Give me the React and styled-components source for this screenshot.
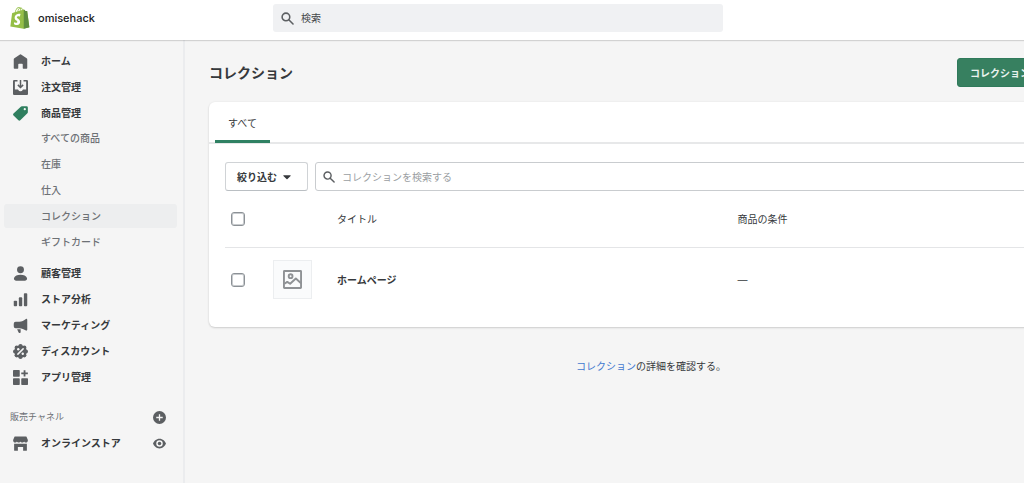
import React from 'react';
import styled, { createGlobalStyle } from 'styled-components';

const GlobalStyle = createGlobalStyle`
  * {
    box-sizing: border-box;
  }
  body {
    margin: 0;
    background-color: #f5f5f5;
    color: #36393c;
    font-family: Inter, 'Noto Sans CJK JP', sans-serif;
    font-size: 10px;
    line-height: 16px;
  }
  button,
  input {
    font: inherit;
    color: inherit;
  }
`;

const Page = styled.div`
  display: flex;
  flex-direction: column;
  min-height: 100vh;
  overflow: hidden;
`;

const Header = styled.header`
  position: relative;
  display: flex;
  align-items: center;
  height: 40px;
  background-color: #fff;
  box-shadow: 0 1px 1px rgba(0, 0, 0, 0.14);
`;

const Brand = styled.a`
  display: flex;
  align-items: center;
  gap: 8px;
  width: 273px;
  padding: 0 0 4px 10px;
  font-size: 11px;
  font-weight: 500;
  color: #202223;
  text-decoration: none;
`;

const SearchBox = styled.label`
  display: flex;
  flex: 1;
  align-items: center;
  gap: 7px;
  max-width: 450px;
  height: 28px;
  margin-bottom: 4px;
  padding: 0 8px;
  border-radius: 3px;
  background-color: #f0f1f3;
  color: #5c5f62;
`;

const TextInput = styled.input`
  flex: 1;
  min-width: 0;
  padding: 0;
  border: 0;
  outline: 0;
  background: none;

  &::placeholder {
    color: ${(props) => props.$placeholder};
    opacity: 1;
  }
`;

const Body = styled.div`
  display: flex;
  flex: 1;
`;

const Sidebar = styled.nav`
  display: flex;
  flex-direction: column;
  flex: 0 0 185px;
  padding-top: 8px;
  border-right: 2px solid #ebecee;
`;

const NavList = styled.ul`
  margin: 0;
  padding: 0;
  list-style: none;
`;

const NavLink = styled.a`
  display: flex;
  align-items: center;
  gap: 13px;
  height: 26px;
  padding-left: 13px;
  font-weight: 600;
  color: #36393c;
  text-decoration: none;

  svg {
    color: ${(props) => (props.$active ? '#2f7f5f' : '#5c5f62')};
  }
`;

const SubList = styled(NavList)`
  display: flex;
  flex-direction: column;
  gap: 2px;
  padding-bottom: 6px;
`;

const SubLink = styled.a`
  display: block;
  margin: 0 6px 0 4px;
  padding: 4px 0 4px 37px;
  border-radius: 3px;
  background-color: ${(props) => (props.$active ? '#edeeef' : 'transparent')};
  font-weight: 500;
  color: #6d7175;
  text-decoration: none;
`;

const ChannelHeading = styled.div`
  display: flex;
  align-items: center;
  justify-content: space-between;
  height: 26px;
  margin-top: 14px;
  padding: 0 17px 0 10px;
  font-size: 9px;
  color: #6d7175;
`;

const ChannelRow = styled.div`
  display: flex;
  align-items: center;
  justify-content: space-between;
  padding-right: 17px;
`;

const IconButton = styled.button`
  display: flex;
  padding: 0;
  border: 0;
  background: none;
  color: #5c5f62;
`;

const Main = styled.main`
  flex: 1 0 908px;
  padding: 18px 0 0 24px;
`;

const TitleRow = styled.div`
  display: flex;
  align-items: center;
  justify-content: space-between;
  margin-bottom: 15px;
`;

const Title = styled.h1`
  margin: 0;
  font-size: 14px;
  font-weight: 600;
  line-height: 20px;
`;

const PrimaryButton = styled.button`
  height: 29px;
  padding: 0 12px;
  border: 1px solid #2f7a5b;
  border-radius: 3px;
  background-color: #378060;
  font-weight: 600;
  color: #e9f2ee;
  white-space: nowrap;
`;

const Card = styled.section`
  border-radius: 6px;
  background-color: #fff;
  box-shadow: 0 1px 2px rgba(23, 24, 24, 0.16), 0 0 3px rgba(23, 24, 24, 0.05);
`;

const Tabs = styled.div`
  display: flex;
  padding: 0 6px;
  border-bottom: 2px solid #e7e8e9;
`;

const Tab = styled.button`
  height: 41px;
  margin-bottom: -1px;
  padding: 3px 13px 0;
  border: 0;
  border-bottom: 3px solid #2f8163;
  border-radius: 2px 2px 0 0;
  background: none;
`;

const Filters = styled.div`
  display: flex;
  gap: 7px;
  padding: 18px 16px 0;
`;

const FilterButton = styled.button`
  display: flex;
  align-items: center;
  gap: 3px;
  height: 29px;
  padding: 0 13px 0 11px;
  border: 1px solid #d0d3d6;
  border-bottom-color: #babfc3;
  border-radius: 3px;
  background-color: #fff;
  font-weight: 600;
`;

const FilterSearch = styled.label`
  display: flex;
  flex: 1;
  align-items: center;
  gap: 7px;
  height: 29px;
  padding: 0 7px;
  border: 1px solid #c9cccf;
  border-radius: 3px;
  color: #5c5f62;
`;

const TableWrap = styled.div`
  padding: 0 16px;
`;

const Table = styled.table`
  width: 100%;
  border-collapse: collapse;
  table-layout: fixed;
`;

const CheckCol = styled.col`
  width: 48px;
`;

const ThumbCol = styled.col`
  width: 64px;
`;

const TitleCol = styled.col`
  width: 47%;
`;

const Th = styled.th`
  height: 56px;
  padding: 0;
  border-bottom: 1px solid #e4e5e7;
  font-weight: 400;
  text-align: left;
`;

const Td = styled.td`
  height: 80px;
  padding: 0 0 15px;
`;

const Checkbox = styled.input.attrs({ type: 'checkbox' })`
  display: block;
  appearance: none;
  width: 14px;
  height: 14px;
  margin: 0 0 0 6px;
  border: 1px solid #8c9196;
  border-radius: 3px;
  background-color: #fff;
  box-shadow: inset 0 0 0 1px #c8cbce;

  &:checked {
    background-color: #378060;
  }
`;

const Thumb = styled.div`
  display: flex;
  align-items: center;
  justify-content: center;
  width: 39px;
  height: 39px;
  border: 1px solid #eceef0;
  background-color: #fafbfc;
  color: #8f9295;
`;

const ItemLink = styled.a`
  font-weight: 600;
  color: #36393c;
  text-decoration: none;
`;

const FooterHelp = styled.p`
  margin: 31px 0 0;
  text-align: center;
`;

const HelpLink = styled.a`
  color: #3f78d0;
  text-decoration: none;
`;

const Icon = ({ size = 15, children }) => (
  <svg width={size} height={size} viewBox="0 0 20 20" fill="currentColor" aria-hidden="true">
    {children}
  </svg>
);

const HomeIcon = () => (
  <Icon>
    <path d="M9.300.5a1.300 1.300 0 0 1 1.400 0l7.500 5.100c.5.4.8.9.8 1.500V18.500a1 1 0 0 1-1 1h-4.200a.8.8 0 0 1-.8-.8V14a1 1 0 0 0-1-1H8a1 1 0 0 0-1 1v4.700a.8.8 0 0 1-.8.800H2a1 1 0 0 1-1-1V7.100c0-.6.3-1.100.8-1.500z" />
  </Icon>
);

const OrdersIcon = () => (
  <Icon>
    <path
      fillRule="evenodd"
      d="M1.500 0H6v2H2.500v10.500h3.700c.3 0 .6.2.7.500A3.300 3.300 0 0 0 10 15a3.300 3.300 0 0 0 3.100-2c.1-.3.4-.5.7-.5h3.700V2H14V0h4.500A1.500 1.500 0 0 1 20 1.500v17a1.500 1.500 0 0 1-1.500 1.500h-17A1.500 1.500 0 0 1 0 18.500v-17A1.500 1.500 0 0 1 1.500 0z"
    />
    <path d="M9 0h2v7.600l1.800-1.800 1.400 1.400L10 11.400 5.800 7.200l1.400-1.400L9 7.600z" />
  </Icon>
);

const ProductsIcon = () => (
  <Icon>
    <path
      fillRule="evenodd"
      d="M10.400.9A1.800 1.800 0 0 1 11.700.4h6.500A1.600 1.600 0 0 1 19.800 2v6.400c0 .5-.2 1-.6 1.300l-9.500 9.400a1.800 1.800 0 0 1-2.500 0L.7 12.600a1.800 1.800 0 0 1 0-2.500zM15.700 5.700a1.500 1.500 0 1 0 0-3 1.500 1.500 0 0 0 0 3z"
    />
  </Icon>
);

const CustomersIcon = () => (
  <Icon>
    <circle cx="10" cy="5" r="4.600" />
    <path d="M10 11.500c4.500 0 7.300 1.600 8.500 4.200.8 1.900-.5 3.800-2.300 3.800H3.800c-1.800 0-3.100-1.900-2.300-3.800 1.200-2.600 4-4.200 8.500-4.200z" />
  </Icon>
);

const AnalyticsIcon = () => (
  <Icon>
    <rect x="1" y="11.500" width="4.500" height="7.500" rx="1.200" />
    <rect x="7.800" y="7" width="4.500" height="12" rx="1.200" />
    <rect x="14.500" y="1.500" width="4.500" height="17.500" rx="1.200" />
  </Icon>
);

const MarketingIcon = () => (
  <Icon>
    <path d="M17.300 1.300c.7-.5 1.700 0 1.700.9v13.600c0 .9-1 1.400-1.700.9-2.700-1.900-5.500-3.200-9-3.200H3.500A2.500 2.500 0 0 1 1 11V7.500A2.500 2.500 0 0 1 3.500 5h4.800c3.500 0 6.300-1.800 9-3.700z" />
    <path d="M5.500 15h4.700v4c0 .6-.4 1-1 1H8.400a1 1 0 0 1-.9-.6z" />
  </Icon>
);

const DiscountIcon = () => (
  <Icon>
    <circle cx="10" cy="10" r="8.300" />
    <circle cx="10" cy="2.800" r="2.800" />
    <circle cx="15.100" cy="4.900" r="2.800" />
    <circle cx="17.200" cy="10" r="2.800" />
    <circle cx="15.100" cy="15.100" r="2.800" />
    <circle cx="10" cy="17.200" r="2.800" />
    <circle cx="4.900" cy="15.100" r="2.800" />
    <circle cx="2.800" cy="10" r="2.800" />
    <circle cx="4.900" cy="4.900" r="2.800" />
    <path d="M6.500 13.500l7-7" stroke="#f5f5f5" strokeWidth="2" strokeLinecap="round" />
    <circle cx="7" cy="7" r="1.600" fill="#f5f5f5" />
    <circle cx="13" cy="13" r="1.600" fill="#f5f5f5" />
  </Icon>
);

const AppsIcon = () => (
  <Icon>
    <rect x="0" y="0" width="9" height="9" rx="1" />
    <rect x="0" y="11" width="9" height="9" rx="1" />
    <rect x="11" y="11" width="9" height="9" rx="1" />
    <path d="M14.200.2h2.400v3.100h3.200v2.400h-3.200v3.100h-2.400V5.700H11V3.300h3.200z" />
  </Icon>
);

const StoreIcon = () => (
  <Icon>
    <path d="M3 .5h14c.4 0 .8.200 1 .6L19.700 5c.5 2-.8 3.700-2.500 3.700-1.300 0-2.100-.7-2.400-1.500-.4.900-1.300 1.500-2.400 1.500S10.400 8.100 10 7.200c-.4.900-1.300 1.500-2.400 1.500S5.600 8.100 5.200 7.200C4.900 8 4.100 8.700 2.800 8.700 1.100 8.700-.2 7 .3 5L2 1.100c.2-.4.600-.6 1-.6z" />
    <path d="M1.500 10.300h17V19a.8.8 0 0 1-.8.800H13.500v-5.300h-7v5.300H2.300a.8.8 0 0 1-.8-.8z" />
  </Icon>
);

const PlusCircleIcon = () => (
  <Icon size={13}>
    <path
      fillRule="evenodd"
      d="M10 0a10 10 0 1 1 0 20 10 10 0 0 1 0-20zM9 5v4H5v2h4v4h2v-4h4V9h-4V5z"
    />
  </Icon>
);

const EyeIcon = () => (
  <Icon size={13}>
    <path
      fillRule="evenodd"
      d="M10 2.500c5 0 8.800 4 10 7.500-1.200 3.500-5 7.500-10 7.500S1.200 13.500 0 10c1.200-3.500 5-7.500 10-7.500zm0 2.500a5 5 0 1 0 0 10 5 5 0 0 0 0-10z"
    />
    <circle cx="10" cy="10" r="2.700" />
  </Icon>
);

const SearchIcon = ({ size }) => (
  <Icon size={size}>
    <g fill="none" stroke="currentColor" strokeWidth="2.400" strokeLinecap="round">
      <circle cx="7.600" cy="7.600" r="5.900" />
      <path d="M12 12l6.500 6.500" />
    </g>
  </Icon>
);

const CaretIcon = () => (
  <Icon size={14}>
    <path d="M5.500 7.500h9c.7 0 1 .8.600 1.200l-4.400 4.200a1 1 0 0 1-1.400 0L4.900 8.700c-.4-.4-.1-1.200.6-1.200z" />
  </Icon>
);

const ImageIcon = () => (
  <Icon size={19}>
    <g fill="none" stroke="currentColor" strokeWidth="2">
      <rect x="1" y="1" width="18" height="18" rx="0.500" />
      <circle cx="8" cy="6.500" r="2" />
      <path d="M1.500 14.500l3-2 3 2 6-5.500 5.500 5" strokeLinejoin="round" />
    </g>
  </Icon>
);

const ShopifyLogo = () => (
  <svg width="20" height="22" viewBox="0 0 110 125" aria-hidden="true">
    <path
      fill="#95bf47"
      d="M95.900 23.900c-.1-.6-.6-1-1.100-1-.5 0-9.300-.2-9.300-.2s-7.400-7.200-8.100-7.900c-.7-.7-2.200-.5-2.700-.3 0 0-1.400.4-3.700 1.100-.4-1.300-1-2.800-1.800-4.400-2.600-5-6.500-7.700-11.100-7.700-.3 0-.6 0-1 .1-.1-.2-.3-.3-.4-.5-2-2.200-4.600-3.200-7.700-3.100-6 .2-12 4.500-16.800 12.200-3.400 5.400-6 12.200-6.700 17.500-6.900 2.100-11.700 3.600-11.800 3.700-3.500 1.100-3.600 1.200-4 4.500-.3 2.500-9.500 72.900-9.500 72.900l75.600 13.100 32.800-8.200S96 24.500 95.900 23.900zM67.200 16.800c-1.700.5-3.700 1.100-5.800 1.800 0-3-.4-7.300-1.800-10.900 4.600.8 6.800 5.900 7.600 9.100zM57.200 19.900c-4 1.200-8.400 2.600-12.700 3.900 1.200-4.700 3.600-9.400 6.400-12.500 1.100-1.100 2.600-2.400 4.300-3.200 1.800 3.500 2.100 8.500 2 11.800zM49.100 4.100c1.400 0 2.600.3 3.600.9-1.600.8-3.200 2.100-4.700 3.600-3.800 4.100-6.700 10.500-7.900 16.600-3.600 1.100-7.200 2.200-10.500 3.200C31.800 19 39.800 4.300 49.100 4.100z"
    />
    <path
      fill="#5e8e3e"
      d="M94.800 23c-.5 0-9.300-.2-9.300-.2s-7.400-7.200-8.100-7.900c-.3-.3-.6-.4-1-.5v109.400l32.800-8.200S96 24.600 95.900 24c-.1-.6-.6-1-1.100-1z"
    />
    <path
      fill="#fff"
      d="M58 39.900l-3.800 14.400s-4.300-2-9.400-1.600c-7.500.5-7.500 5.200-7.500 6.400.4 6.400 17.300 7.800 18.300 22.900.7 11.900-6.300 20-16.400 20.600-12.200.8-18.900-6.400-18.900-6.400l2.600-11s6.700 5.100 12.100 4.700c3.500-.2 4.800-3.100 4.700-5.100-.5-8.400-14.300-7.900-15.200-21.700-.7-11.600 6.900-23.400 23.700-24.400 6.500-.5 9.800 1.200 9.800 1.200z"
    />
  </svg>
);

const topItems = [
  { label: 'ホーム', icon: HomeIcon },
  { label: '注文管理', icon: OrdersIcon },
  { label: '商品管理', icon: ProductsIcon, active: true },
];

const productItems = ['すべての商品', '在庫', '仕入', 'コレクション', 'ギフトカード'];

const bottomItems = [
  { label: '顧客管理', icon: CustomersIcon },
  { label: 'ストア分析', icon: AnalyticsIcon },
  { label: 'マーケティング', icon: MarketingIcon },
  { label: 'ディスカウント', icon: DiscountIcon },
  { label: 'アプリ管理', icon: AppsIcon },
];

const NavItems = ({ items }) => (
  <NavList>
    {items.map(({ label, icon: ItemIcon, active }) => (
      <li key={label}>
        <NavLink href="#" $active={active}>
          <ItemIcon />
          {label}
        </NavLink>
      </li>
    ))}
  </NavList>
);

const Navigation = () => (
  <Sidebar>
    <NavItems items={topItems} />
    <SubList>
      {productItems.map((label) => (
        <li key={label}>
          <SubLink href="#" $active={label === 'コレクション'}>
            {label}
          </SubLink>
        </li>
      ))}
    </SubList>
    <NavItems items={bottomItems} />
    <ChannelHeading>
      販売チャネル
      <IconButton type="button" aria-label="チャネルを追加">
        <PlusCircleIcon />
      </IconButton>
    </ChannelHeading>
    <ChannelRow>
      <NavLink href="#">
        <StoreIcon />
        オンラインストア
      </NavLink>
      <IconButton type="button" aria-label="ストアを表示">
        <EyeIcon />
      </IconButton>
    </ChannelRow>
  </Sidebar>
);

const CollectionTable = () => (
  <Table>
    <colgroup>
      <CheckCol />
      <ThumbCol />
      <TitleCol />
      <col />
    </colgroup>
    <thead>
      <tr>
        <Th>
          <Checkbox aria-label="すべて選択" />
        </Th>
        <Th />
        <Th scope="col">タイトル</Th>
        <Th scope="col">商品の条件</Th>
      </tr>
    </thead>
    <tbody>
      <tr>
        <Td>
          <Checkbox aria-label="ホームページを選択" />
        </Td>
        <Td>
          <Thumb>
            <ImageIcon />
          </Thumb>
        </Td>
        <Td>
          <ItemLink href="#">ホームページ</ItemLink>
        </Td>
        <Td>—</Td>
      </tr>
    </tbody>
  </Table>
);

function App() {
  return (
    <>
      <GlobalStyle />
      <Page lang="ja">
        <Header>
          <Brand href="#">
            <ShopifyLogo />
            omisehack
          </Brand>
          <SearchBox>
            <SearchIcon size={13} />
            <TextInput type="search" placeholder="検索" aria-label="検索" $placeholder="#44474a" />
          </SearchBox>
        </Header>
        <Body>
          <Navigation />
          <Main>
            <TitleRow>
              <Title>コレクション</Title>
              <PrimaryButton type="button">コレクションを作成する</PrimaryButton>
            </TitleRow>
            <Card>
              <Tabs role="tablist">
                <Tab type="button" role="tab" aria-selected="true">
                  すべて
                </Tab>
              </Tabs>
              <Filters>
                <FilterButton type="button">
                  絞り込む
                  <CaretIcon />
                </FilterButton>
                <FilterSearch>
                  <SearchIcon size={12} />
                  <TextInput
                    type="search"
                    placeholder="コレクションを検索する"
                    aria-label="コレクションを検索する"
                    $placeholder="#9a9ea2"
                  />
                </FilterSearch>
              </Filters>
              <TableWrap>
                <CollectionTable />
              </TableWrap>
            </Card>
            <FooterHelp>
              <HelpLink href="#">コレクション</HelpLink>の詳細を確認する。
            </FooterHelp>
          </Main>
        </Body>
      </Page>
    </>
  );
}

export default App;
